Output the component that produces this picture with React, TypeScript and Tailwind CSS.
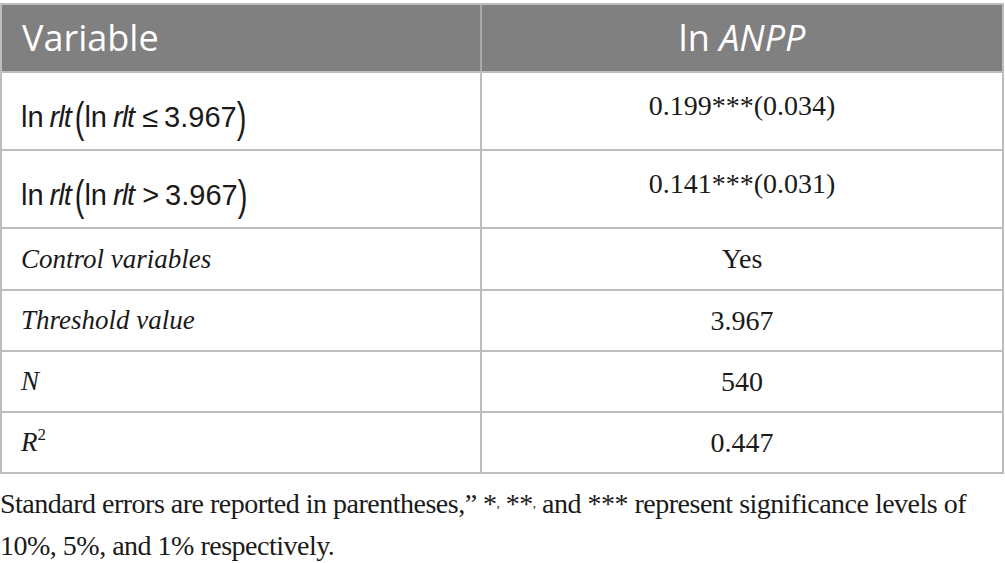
const serif = "font-['Liberation_Serif','Times_New_Roman',serif]";
const sans = "font-['Liberation_Sans',Arial,sans-serif]";

const Paren = ({ children }: { children: string }) => (
  <span className="inline-block scale-y-[1.45] translate-y-[1px] font-light">{children}</span>
);

const MathCell = ({ op }: { op: string }) => (
  <span className={`${sans} text-[29px] text-[#1a1a1a] flex items-baseline`}>
    <span>ln</span>
    <span className="italic ml-[6px] tracking-[-1px]">rlt</span>
    <span className="ml-[4px]">
      <Paren>(</Paren>
    </span>
    <span>ln</span>
    <span className="italic ml-[6px] tracking-[-1px]">rlt</span>
    <span className="ml-[8px]">{op}</span>
    <span className="ml-[6px]">3.967</span>
    <Paren>)</Paren>
  </span>
);

type Row = { label: React.ReactNode; value: string; h: string };

const rows: Row[] = [
  { label: <MathCell op="≤" />, value: "0.199***(0.034)", h: "h-[78px]" },
  { label: <MathCell op=">" />, value: "0.141***(0.031)", h: "h-[78px]" },
  { label: <span className="italic">Control variables</span>, value: "Yes", h: "h-[62px]" },
  { label: <span className="italic">Threshold value</span>, value: "3.967", h: "h-[61px]" },
  { label: <span className="italic">N</span>, value: "540", h: "h-[61px]" },
  {
    label: (
      <span className="italic">
        R<sup className="text-[17px] not-italic relative -top-[11px]">2</sup>
      </span>
    ),
    value: "0.447",
    h: "h-[61px]",
  },
];

export default function App() {
  return (
    <div className="w-[1005px] h-[563px] bg-white overflow-hidden pt-[3px]">
      <div className="w-[1004px] border-2 border-[#bdbdbd]">
        {/* Header */}
        <div className="grid grid-cols-[480px_1fr] h-[66px] bg-[#808080] font-['Open_Sans',sans-serif] text-white text-[36px]">
          <div className="flex items-center pl-[20px] border-r-2 border-[#a9a9a9]">Variable</div>
          <div className="flex items-center justify-center">
            ln&nbsp;<span className="italic">ANPP</span>
          </div>
        </div>

        {/* Body */}
        {rows.map((r, i) => (
          <div key={i} className={`grid grid-cols-[480px_1fr] ${r.h} border-t-2 border-[#bdbdbd]`}>
            <div className={`flex items-center pl-[19px] border-r-2 border-[#bdbdbd] ${serif} text-[27px] text-[#1a1a1a] ${i < 2 ? "pt-[14px]" : ""}`}>
              {r.label}
            </div>
            <div className={`flex items-center justify-center ${serif} text-[28px] text-[#1a1a1a] ${i < 2 ? "pb-[10px]" : ""}`}>
              {r.value}
            </div>
          </div>
        ))}
      </div>

      {/* Footnote */}
      <p className={`${serif} text-[28px] leading-[42px] text-[#1a1a1a] mt-[9px] tracking-[-0.5px]`}>
        Standard errors are reported in parentheses,” *<sup className="text-[13px]">,</sup> **
        <sup className="text-[13px]">,</sup> and *** represent significance levels of
        <br />
        10%, 5%, and 1% respectively.
      </p>
    </div>
  );
}
